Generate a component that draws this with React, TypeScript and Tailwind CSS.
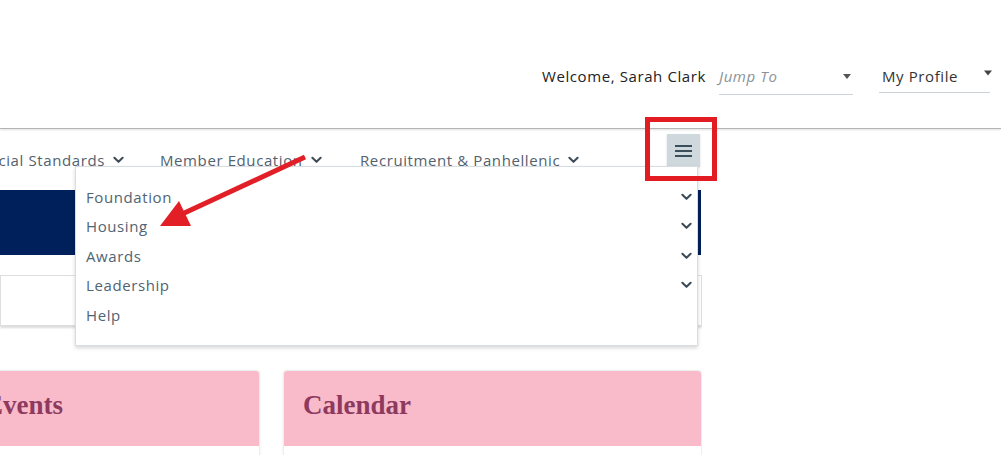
import React from "react";

const Chevron = ({ className = "" }: { className?: string }) => (
  <svg viewBox="0 0 12 8" className={className} fill="none" stroke="currentColor" strokeWidth="2.2" strokeLinecap="round" strokeLinejoin="round">
    <path d="M1.5 1.5 6 6l4.5-4.5" />
  </svg>
);

const Caret = ({ className = "" }: { className?: string }) => (
  <svg viewBox="0 0 10 6" className={className} fill="currentColor">
    <path d="M0 0h10L5 6z" />
  </svg>
);

const navItems = [
  { label: "Social Standards", w: "w-[180px]" },
  { label: "Member Education", w: "w-[200px]" },
  { label: "Recruitment & Panhellenic", w: "w-[307px]" },
];

const menuItems = [
  { label: "Foundation", sub: true },
  { label: "Housing", sub: true },
  { label: "Awards", sub: true },
  { label: "Leadership", sub: true },
  { label: "Help", sub: false },
];

export default function App() {
  return (
    <div className="relative w-[1001px] h-[455px] overflow-hidden bg-white font-['Open_Sans',sans-serif] tracking-[0.6px]">
      {/* top header */}
      <header className="h-[129px] border-b border-[#b4b4b4] shadow-[0_1px_2px_rgba(0,0,0,0.12)] flex justify-end items-start pt-[62px] pr-[11px]">
        <span className="text-[15px] leading-[28px] text-[#222]">Welcome, Sarah Clark</span>
        <div className="ml-[13px] w-[134px] h-[33px] border-b border-[#cdd3d7] flex justify-between items-start">
          <span className="text-[15px] leading-[28px] italic text-[#8b939a]">Jump To</span>
          <Caret className="w-[8px] h-[5px] mt-[12px] mr-[2px] text-[#555]" />
        </div>
        <div className="ml-[26px] w-[111px] h-[31px] border-b border-[#cdd3d7] flex justify-between items-start">
          <span className="text-[15px] leading-[28px] text-[#333] pl-[3px]">My Profile</span>
          <Caret className="w-[8px] h-[6px] mt-[8px] -mr-[2px] text-[#444]" />
        </div>
      </header>

      {/* main nav */}
      <nav className="h-[61px] w-[702px] flex justify-end items-start overflow-hidden pt-[5px] pr-[2px]">
        {navItems.map((item) => (
          <div key={item.label} className={`${item.w} shrink-0 flex items-center gap-[8px] pt-[15px] text-[15px] leading-[22px] text-[#53616e]`}>
            <span className="whitespace-nowrap">{item.label}</span>
            <Chevron className="w-[11px] h-[8px] text-[#3e4b57]" />
          </div>
        ))}
        <button className="shrink-0 w-[33px] h-[33px] bg-[#cfd8dd] shadow-[0_1px_2px_rgba(0,0,0,0.15)] flex flex-col items-center justify-center gap-[3px]">
          <span className="block w-[17px] h-[2px] bg-[#3b4e5c]" />
          <span className="block w-[17px] h-[2px] bg-[#3b4e5c]" />
          <span className="block w-[17px] h-[2px] bg-[#3b4e5c]" />
        </button>
      </nav>

      {/* content */}
      <div className="w-[702px] overflow-hidden">
        <div className="w-[701px] h-[65px] bg-[#00205b]" />
        <div className="mt-[20px] w-[702px] h-[51px] border border-[#dedede] shadow-[0_2px_2px_rgba(0,0,0,0.14)] bg-white" />
        <div className="mt-[44px] flex justify-end gap-[23px]">
          <div className="w-[295px] shrink-0 rounded-t-[3px] border border-[#eeeeee] shadow-[0_1px_3px_rgba(0,0,0,0.08)]">
            <div className="h-[75px] bg-[#f9bbca] rounded-t-[3px] flex items-center px-[19px] pb-[6px]">
              <h2 className="text-[27px] leading-none font-bold tracking-normal text-[#8e3a5f] font-['Liberation_Serif',serif]">Events</h2>
            </div>
            <div className="h-[40px] bg-white" />
          </div>
          <div className="w-[419px] shrink-0 rounded-t-[3px] border border-[#eeeeee] shadow-[0_1px_3px_rgba(0,0,0,0.08)]">
            <div className="h-[75px] bg-[#f9bbca] rounded-t-[3px] flex items-center px-[19px] pb-[6px]">
              <h2 className="text-[27px] leading-none font-bold tracking-normal text-[#8e3a5f] font-['Liberation_Serif',serif]">Calendar</h2>
            </div>
            <div className="h-[40px] bg-white" />
          </div>
        </div>
      </div>

      {/* opened dropdown menu */}
      <div className="absolute left-[75px] top-[166px] w-[623px] h-[180px] bg-white border border-[#d8dde1] shadow-[0_2px_4px_rgba(0,0,0,0.16)] pt-[15px] pl-[10px] pr-[5px]">
        {menuItems.map((m) => (
          <div key={m.label} className="h-[29.5px] flex items-center justify-between text-[15px] text-[#506473]">
            <span>{m.label}</span>
            {m.sub && <Chevron className="w-[11px] h-[8px] text-[#3c4a56]" />}
          </div>
        ))}
      </div>

      {/* annotations */}
      <div className="absolute left-[645px] top-[117px] w-[72px] h-[64px] border-[5px] border-[#e31b23] pointer-events-none" />
      <svg className="absolute left-0 top-0 pointer-events-none" width="1001" height="455">
        <line x1="305" y1="157" x2="180" y2="215" stroke="#e21f26" strokeWidth="5" />
        <polygon points="160,226 179,201 191,226" fill="#e21f26" />
      </svg>
    </div>
  );
}
